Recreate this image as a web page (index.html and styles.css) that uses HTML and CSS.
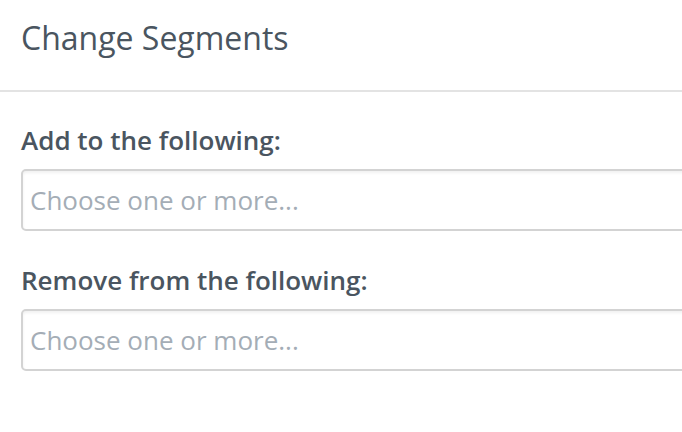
FILE: index.html
```html
<!DOCTYPE html>
<html>
<head>
<meta charset="utf-8">
<link rel="stylesheet" href="styles.css">
</head>
<body>
<div class="modal">
  <div class="header"><h1 class="title">Change Segments</h1></div>
  <div class="body">
    <div class="field">
      <label class="label">Add to the following:</label>
      <div class="select"><span class="placeholder">Choose one or more...</span></div>
    </div>
    <div class="field">
      <label class="label">Remove from the following:</label>
      <div class="select"><span class="placeholder">Choose one or more...</span></div>
    </div>
  </div>
</div>
</body>
</html>
```
FILE: styles.css
```css
html, body { margin: 0; padding: 0; background: #fff; }
body { width: 682px; height: 432px; overflow: hidden; font-family: "Open Sans", sans-serif; }
.modal { width: 682px; overflow: hidden; }
.header { height: 92px; border-bottom: 2px solid #e3e3e3; padding: 0 21px; box-sizing: border-box; display: flex; align-items: flex-start; }
.title { margin: 0; padding-top: 16px; font-size: 32px; font-weight: 400; color: #4a5560; line-height: 44px; }
.body { padding: 30px 0 0 21px; }
.field { margin-bottom: 31px; }
.label { display: block; font-size: 26px; font-weight: 600; color: #4a5560; line-height: 36px; margin-bottom: 11px; }
.select { width: calc(100% + 20px); height: 62px; box-sizing: border-box; border: 2px solid #d3d3d3; border-radius: 5px; box-shadow: inset 0 2px 3px rgba(0,0,0,0.06); display: flex; align-items: center; padding: 0 7px; }
.placeholder { font-size: 26px; color: #a4adb6; }
```
